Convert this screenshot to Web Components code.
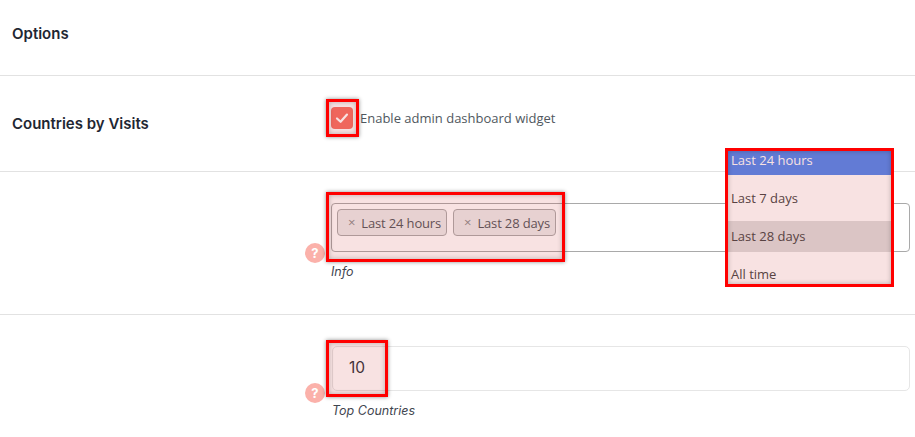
<!DOCTYPE html>
<html lang="en">
<head>
<meta charset="utf-8">
<title>Options</title>
<style>
  html, body { margin: 0; height: 437px; overflow: hidden; background: #fff; }
</style>
</head>
<body>
<settings-page>
  <settings-row label="Options" style="--row-h: 75px; --label-shift: -9px"></settings-row>

  <settings-row label="Countries by Visits" style="--row-h: 95px">
    <check-field>Enable admin dashboard widget</check-field>
  </settings-row>

  <settings-row style="--row-h: 142px; --pad-top: 31px">
    <help-field caption="Info" style="--help-top: 40px">
      <tag-select>
        <tag-chip>Last 24 hours</tag-chip>
        <tag-chip>Last 28 days</tag-chip>
      </tag-select>
      <mark-box slot="over" style="left:-5px;top:-11px;width:239px;height:70px"></mark-box>
    </help-field>
    <option-list slot="over"></option-list>
  </settings-row>

  <settings-row style="--row-h: 122px; --pad-top: 31px; --rule: none">
    <help-field caption="Top Countries" style="--help-top: 37px; --cap-left: 1px">
      <number-field value="10"></number-field>
      <mark-box slot="over" style="left:-5px;top:-6px;width:62px;height:57px"></mark-box>
    </help-field>
  </settings-row>
</settings-page>

<script>
// each component keeps its own markup and styles in the class
class SettingsPage extends HTMLElement {
  constructor() {
    super();
    this.attachShadow({ mode: "open" });
    this.shadowRoot.innerHTML = `
      <style>
        :host { display: flex; flex-direction: column; width: 915px; color: #23282d; font-family: 'Open Sans', sans-serif; }
      </style>
      <slot></slot>
    `;
  }
}

class SettingsRow extends HTMLElement {
  constructor() {
    super();
    this.attachShadow({ mode: "open" });
  }

  connectedCallback() {
    const label = this.getAttribute("label") || "";
    this.shadowRoot.innerHTML = `
      <style>
        :host { display: grid; grid-template-columns: 319px 579px; padding-left: 12px; height: var(--row-h); border-bottom: var(--rule, 1px solid #e2e2e2); position: relative; }
        .label { font: 600 15px 'Inter', sans-serif; color: #1f2733; align-self: center; margin-top: var(--label-shift, 0); }
        .control { padding-top: var(--pad-top, 0); min-width: 0; }
      </style>
      <div class="label">${label}</div>
      <div class="control"><slot></slot></div>
      <slot name="over"></slot>
    `;
  }
}

class CheckField extends HTMLElement {
  constructor() {
    super();
    this.attachShadow({ mode: "open" });
    this.shadowRoot.innerHTML = `
      <style>
        :host { display: flex; align-items: center; gap: 7px; padding-top: 31px; font-size: 13px; color: #50575e; position: relative; }
        .box { width: 22px; height: 22px; border-radius: 4px; background: #f56e62; display: flex; align-items: center; justify-content: center; }
        mark-box { left: -5px; top: 23px; width: 33px; height: 38px; }
      </style>
      <span class="box">
        <svg width="16" height="16" viewBox="0 0 16 16"><path d="M3 8.5 6.6 11.8 13 4.6" fill="none" stroke="#fff" stroke-width="2.2" stroke-linecap="round" stroke-linejoin="round"/></svg>
      </span>
      <slot></slot>
      <mark-box></mark-box>
    `;
  }
}

class HelpField extends HTMLElement {
  constructor() {
    super();
    this.attachShadow({ mode: "open" });
  }

  connectedCallback() {
    this.shadowRoot.innerHTML = `
      <style>
        :host { display: block; position: relative; }
        .help { position: absolute; left: -26px; top: var(--help-top); width: 20px; height: 20px; border-radius: 50%; background: #fbb1aa; color: #fff; font: 700 13px/20px 'Inter', sans-serif; text-align: center; }
        .caption { margin: 12px 0 0 var(--cap-left, 0); font: italic 400 12.5px 'Inter', sans-serif; color: #3f4650; }
      </style>
      <slot></slot>
      <span class="help">?</span>
      <p class="caption">${this.getAttribute("caption")}</p>
      <slot name="over"></slot>
    `;
  }
}

class TagSelect extends HTMLElement {
  constructor() {
    super();
    this.attachShadow({ mode: "open" });
    this.shadowRoot.innerHTML = `
      <style>
        :host { display: flex; gap: 6px; align-items: flex-start; box-sizing: border-box; height: 49px; padding: 5px; border: 1px solid #a9a9a9; border-radius: 4px; background: #fff; }
      </style>
      <slot></slot>
    `;
  }
}

class TagChip extends HTMLElement {
  constructor() {
    super();
    this.attachShadow({ mode: "open" });
    this.shadowRoot.innerHTML = `
      <style>
        :host { display: flex; align-items: center; gap: 6px; box-sizing: border-box; height: 27px; padding: 0 5px 0 10px; background: #ececec; border: 1px solid #aaa; border-radius: 4px; font-size: 13px; letter-spacing: -0.15px; color: #50555a; white-space: nowrap; }
        .x { color: #8a8a8a; font-size: 13px; line-height: 1; }
      </style>
      <span class="x">×</span><slot></slot>
    `;
  }
}

class NumberField extends HTMLElement {
  constructor() {
    super();
    this.attachShadow({ mode: "open" });
  }

  connectedCallback() {
    this.shadowRoot.innerHTML = `
      <style>
        :host { display: block; box-sizing: border-box; height: 45px; margin-left: 1px; padding-left: 16px; border: 1px solid #e6e6e6; border-radius: 5px; font: 400 15.5px/41px 'Inter', sans-serif; color: #2b2f38; background: #fff; }
      </style>
      ${this.getAttribute("value")}
    `;
  }
}

class OptionList extends HTMLElement {
  constructor() {
    super();
    this.attachShadow({ mode: "open" });
    this.shadowRoot.innerHTML = `
      <style>
        :host { position: absolute; left: 725px; top: -24px; width: 169px; height: 139px; box-sizing: border-box; background: #fff; font-size: 13px; color: #444; overflow: hidden; }
        .opt { padding-left: 6px; display: flex; align-items: center; box-sizing: border-box; }
        .current { height: 27px; background: #4f86f0; color: #fff; padding-bottom: 4px; }
        .week { height: 46px; }
        .month { height: 31px; background: #ddd; padding-bottom: 2px; }
        .all { height: 35px; padding-top: 9px; }
      </style>
      <div class="opt current">Last 24 hours</div>
      <div class="opt week">Last 7 days</div>
      <div class="opt month">Last 28 days</div>
      <div class="opt all">All time</div>
      <mark-box style="left:0;top:0;width:100%;height:100%"></mark-box>
    `;
  }
}

// the red annotation rectangle laid over a control
class MarkBox extends HTMLElement {
  constructor() {
    super();
    this.attachShadow({ mode: "open" });
    this.shadowRoot.innerHTML = `
      <style>
        :host { position: absolute; display: block; box-sizing: border-box; border: 3px solid #f00; background: rgba(205, 60, 60, 0.15); box-shadow: 0 0 4px rgba(0,0,0,.45), inset 0 0 5px rgba(0,0,0,.25); pointer-events: none; }
      </style>
    `;
  }
}

customElements.define("settings-page", SettingsPage);
customElements.define("settings-row", SettingsRow);
customElements.define("check-field", CheckField);
customElements.define("help-field", HelpField);
customElements.define("tag-select", TagSelect);
customElements.define("tag-chip", TagChip);
customElements.define("number-field", NumberField);
customElements.define("option-list", OptionList);
customElements.define("mark-box", MarkBox);
</script>
</body>
</html>
